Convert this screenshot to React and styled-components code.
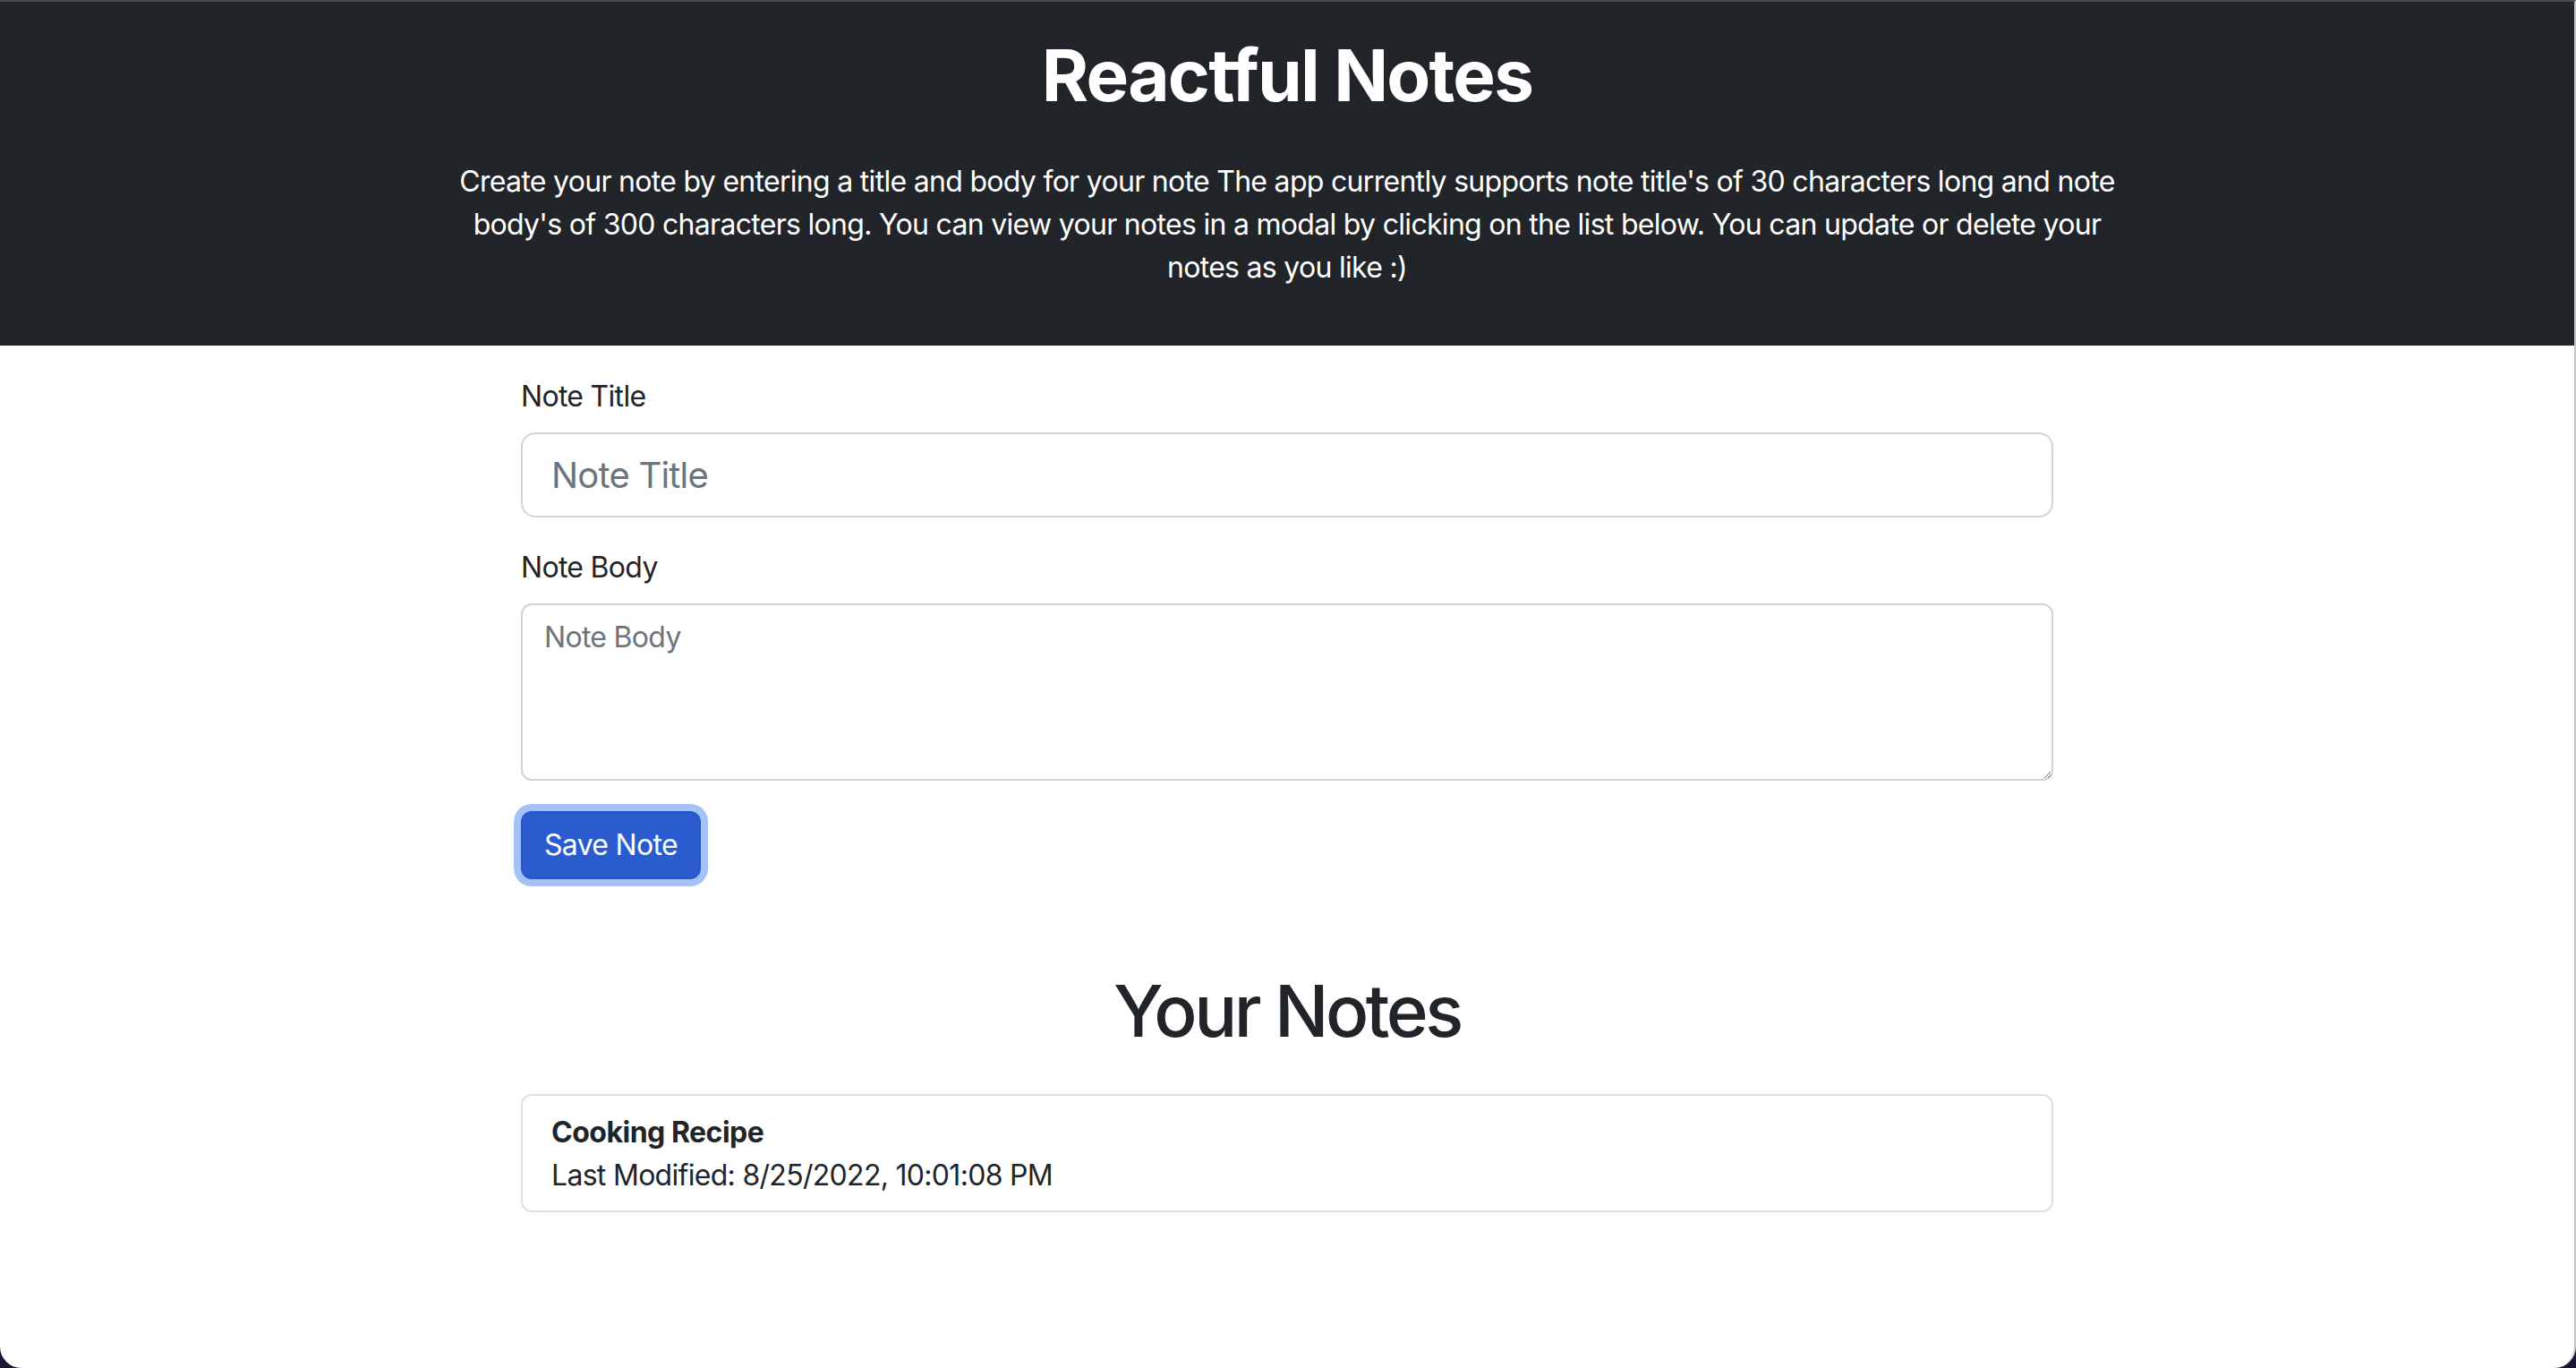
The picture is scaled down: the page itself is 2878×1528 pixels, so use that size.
import styled, { createGlobalStyle } from 'styled-components';

const GlobalStyle = createGlobalStyle`
  html, body {
    margin: 0;
    padding: 0;
    background-color: #1b1531;
  }
  * {
    box-sizing: border-box;
  }
  body {
    font-family: Inter, "Noto Sans", "Liberation Sans", sans-serif;
    color: #212529;
    letter-spacing: -0.7px;
  }
`;

const Page = styled.div`
  min-height: 1528px;
  background-color: #fff;
  border-top: 2px solid #4b4b4d;
  border-right: 2px solid #c4c4c4;
  border-radius: 0 0 24px 24px;
  overflow: hidden;
`;

const Header = styled.header`
  background-color: #212529;
  color: #fff;
  text-align: center;
  padding: 34px 40px 32px;
`;

const Title = styled.h1`
  margin: 0 0 47px;
  font-size: 80px;
  line-height: 96px;
  font-weight: 700;
  letter-spacing: -1.8px;
`;

const Lead = styled.p`
  max-width: 1900px;
  margin: 0 auto 31px;
  font-size: 32px;
  line-height: 48px;
  font-weight: 400;
`;

const Main = styled.main`
  width: 1712px;
  margin: 0 auto;
  padding-top: 33px;
`;

const Field = styled.div`
  margin-bottom: ${(props) => props.mb || 32}px;
`;

const Label = styled.label`
  display: block;
  margin-bottom: 16px;
  font-size: 32px;
  line-height: 48px;
`;

const TitleInput = styled.input`
  display: block;
  width: 100%;
  height: 95px;
  padding: 16px 32px;
  font-family: inherit;
  font-size: 40px;
  line-height: 60px;
  letter-spacing: -0.8px;
  color: #212529;
  background: #fff;
  border: 2px solid #ced4da;
  border-radius: 16px;
  outline: none;

  &::placeholder {
    color: #6c757d;
  }
`;

const BodyInput = styled.textarea`
  display: block;
  width: 100%;
  height: 198px;
  padding: 12px 24px;
  font-family: inherit;
  font-size: 32px;
  line-height: 48px;
  letter-spacing: -0.7px;
  color: #212529;
  background: #fff;
  border: 2px solid #ced4da;
  border-radius: 12px;
  resize: vertical;
  outline: none;

  &::placeholder {
    color: #6c757d;
  }
`;

const SaveButton = styled.button`
  display: inline-block;
  height: 76px;
  padding: 12px 24px;
  font-family: inherit;
  font-size: 32px;
  line-height: 48px;
  letter-spacing: -0.7px;
  color: #fff;
  background-color: #2a5ccf;
  border: 2px solid #2756c6;
  border-radius: 12px;
  box-shadow: 0 0 0 8px #a3c2f8;
  cursor: pointer;
`;

const SectionTitle = styled.h2`
  margin: 99px 0 45px;
  text-align: center;
  font-size: 80px;
  line-height: 96px;
  font-weight: 500;
  letter-spacing: -3.5px;
`;

const NoteList = styled.ul`
  list-style: none;
  margin: 0;
  padding: 0;
  border: 2px solid #dfdfdf;
  border-radius: 12px;
`;

const NoteItem = styled.li`
  padding: 17px 32px 15px;
  font-size: 32px;
  line-height: 48px;
  cursor: pointer;
`;

const NoteName = styled.div`
  font-weight: 700;
  letter-spacing: -0.5px;
`;

const notes = [
  { id: 1, title: 'Cooking Recipe', modified: '8/25/2022, 10:01:08 PM' },
];

const App = () => {
  return (
    <>
      <GlobalStyle />
      <Page>
        <Header>
          <Title>Reactful Notes</Title>
          <Lead>
            Create your note by entering a title and body for your note The app
            currently supports note title's of 30 characters long and note
            body's of 300 characters long. You can view your notes in a modal by
            clicking on the list below. You can update or delete your notes as
            you like :)
          </Lead>
        </Header>
        <Main>
          <Field>
            <Label htmlFor="title">Note Title</Label>
            <TitleInput id="title" placeholder="Note Title" />
          </Field>
          <Field mb={34}>
            <Label htmlFor="body">Note Body</Label>
            <BodyInput id="body" placeholder="Note Body" />
          </Field>
          <SaveButton>Save Note</SaveButton>
          <SectionTitle>Your Notes</SectionTitle>
          <NoteList>
            {notes.map((note) => (
              <NoteItem key={note.id}>
                <NoteName>{note.title}</NoteName>
                <div>Last Modified: {note.modified}</div>
              </NoteItem>
            ))}
          </NoteList>
        </Main>
      </Page>
    </>
  );
};

export default App;
